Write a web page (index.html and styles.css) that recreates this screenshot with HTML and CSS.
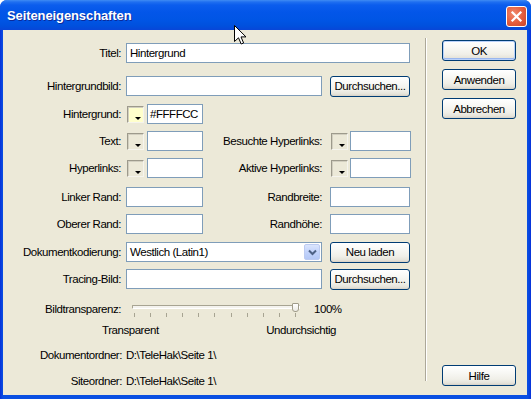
FILE: index.html
```html
<!DOCTYPE html>
<html lang="de">
<head>
<meta charset="utf-8">
<title>Seiteneigenschaften</title>
<link rel="stylesheet" href="styles.css">
</head>
<body>
<div class="window">
  <div class="titlebar">
    <span class="title">Seiteneigenschaften</span>
    <span class="close">
      <svg width="13" height="13" viewBox="0 0 13 13"><path d="M2.5 2.5 L10.5 10.5 M10.5 2.5 L2.5 10.5" stroke="#fff" stroke-width="2.2" stroke-linecap="square"/></svg>
    </span>
  </div>
  <div class="client">
    <div class="form">
      <div class="row">
        <label class="lbl">Titel:</label>
        <div class="input w-title">Hintergrund</div>
      </div>
      <div class="row gap13">
        <label class="lbl">Hintergrundbild:</label>
        <div class="input w-path"></div>
        <button class="btn btn-side">Durchsuchen...</button>
      </div>
      <div class="row gap8">
        <label class="lbl">Hintergrund:</label>
        <span class="swatch swatch-bg"><i class="tri"></i></span>
        <div class="input w-color">#FFFFCC</div>
      </div>
      <div class="row">
        <label class="lbl">Text:</label>
        <span class="swatch"><i class="tri"></i></span>
        <div class="input w-color"></div>
        <label class="lbl2">Besuchte Hyperlinks:</label>
        <span class="swatch swatch-r"><i class="tri"></i></span>
        <div class="input w-color2"></div>
      </div>
      <div class="row">
        <label class="lbl">Hyperlinks:</label>
        <span class="swatch"><i class="tri"></i></span>
        <div class="input w-color"></div>
        <label class="lbl2">Aktive Hyperlinks:</label>
        <span class="swatch swatch-r"><i class="tri"></i></span>
        <div class="input w-color2"></div>
      </div>
      <div class="row gap9">
        <label class="lbl">Linker Rand:</label>
        <div class="input w-small"></div>
        <label class="lbl2">Randbreite:</label>
        <div class="input w-small2"></div>
      </div>
      <div class="row">
        <label class="lbl">Oberer Rand:</label>
        <div class="input w-small"></div>
        <label class="lbl2">Randhöhe:</label>
        <div class="input w-small2"></div>
      </div>
      <div class="row gap8">
        <label class="lbl">Dokumentkodierung:</label>
        <div class="select">
          <span class="select-text">Westlich (Latin1)</span>
          <span class="select-arrow"><svg width="9" height="7" viewBox="0 0 9 7"><path d="M1 1.5 L4.5 5 L8 1.5" fill="none" stroke="#4d6185" stroke-width="2"/></svg></span>
        </div>
        <button class="btn btn-side">Neu laden</button>
      </div>
      <div class="row">
        <label class="lbl">Tracing-Bild:</label>
        <div class="input w-path"></div>
        <button class="btn btn-side">Durchsuchen...</button>
      </div>
      <div class="row slider-row">
        <label class="lbl">Bildtransparenz:</label>
        <div class="slider">
          <div class="track"></div>
          <div class="ticks">
            <i></i><i></i><i></i><i></i><i></i><i></i><i></i><i></i><i></i><i></i><i></i>
          </div>
          <span class="thumb"></span>
        </div>
        <span class="pct">100%</span>
      </div>
      <div class="captions">
        <span>Transparent</span>
        <span>Undurchsichtig</span>
      </div>
      <div class="info info-doc">
        <span class="lbl lbl-info">Dokumentordner:</span>
        <span class="val">D:\TeleHak\Seite 1\</span>
      </div>
      <div class="info info-site">
        <span class="lbl lbl-info">Siteordner:</span>
        <span class="val">D:\TeleHak\Seite 1\</span>
      </div>
    </div>
    <div class="sep"></div>
    <div class="actions">
      <button class="btn btn-act btn-default">OK</button>
      <button class="btn btn-act btn-apply">Anwenden</button>
      <button class="btn btn-act btn-cancel">Abbrechen</button>
      <button class="btn btn-act btn-help">Hilfe</button>
    </div>
  </div>
  <svg class="cursor" width="13" height="21" viewBox="0 0 13 21"><path d="M0.5 0.5 L0.5 16.5 L4.5 12.8 L7.2 19 L9.6 18 L7 11.9 L12 11.9 Z" fill="#fff" stroke="#000" stroke-width="1" stroke-linejoin="miter"/></svg>
</div>
</body>
</html>
```

FILE: styles.css
```css
* { box-sizing: border-box; }

body {
  margin: 0;
  background: #ffffff;
  font-family: "Liberation Sans", Arial, sans-serif;
  font-size: 11.5px;
  letter-spacing: -0.45px;
  color: #000;
}

.window {
  position: relative;
  width: 531px;
  height: 399px;
  display: flex;
  flex-direction: column;
  background: linear-gradient(90deg, #0831d9 0, #0846e0 2px, #0a4fe2 3px, #0a4fe2 527px, #0846e0 529px, #0831d9 531px);
  border-radius: 7px 7px 0 0;
  overflow: hidden;
}

.titlebar {
  flex: none;
  height: 30px;
  display: flex;
  align-items: center;
  padding: 0 4px 0 7px;
  background: linear-gradient(#3f8cf3 0, #1f6ff0 2px, #0b5ded 5px, #0356e9 12px, #0055e5 20px, #0050dd 26px, #0846d8 30px);
}

.title {
  flex: 1;
  color: #fff;
  font-weight: bold;
  font-size: 13px;
  letter-spacing: -0.1px;
  text-shadow: 1px 1px #0b2a9a;
  margin-top: 1px;
}

.close {
  width: 21px;
  height: 21px;
  margin-top: 2px;
  border: 1px solid #fff;
  border-radius: 3px;
  background: radial-gradient(circle at 35% 35%, #f0896c 0, #e35c3c 55%, #c6452a 100%);
  display: flex;
  align-items: center;
  justify-content: center;
}

.client {
  flex: 1;
  margin: 0 4px 4px 3px;
  background: #ece9d8;
  display: flex;
}

/* ---------- form ---------- */
.form {
  width: 422px;
  flex: none;
  padding-top: 13px;
  display: flex;
  flex-direction: column;
}

.row {
  display: flex;
  align-items: center;
  height: 20px;
  margin-top: 7px;
}
.row:first-child { margin-top: 0; }
.row.gap8 { margin-top: 8px; }
.row.gap9 { margin-top: 9px; }
.row.gap13 { margin-top: 13px; }

.lbl {
  width: 118px;
  flex: none;
  text-align: right;
  margin-right: 5px;
  white-space: nowrap;
}

.lbl2 {
  width: 119px;
  flex: none;
  text-align: right;
  white-space: nowrap;
}

.input {
  height: 20px;
  border: 1px solid #7f9db9;
  background: #fff;
  padding: 0 3px;
  line-height: 18px;
  white-space: nowrap;
  flex: none;
}
.w-title { width: 284px; }
.w-path { width: 196px; }
.w-color { width: 56px; padding-left: 2px; }
.w-color2 { width: 61px; }
.w-small { width: 77px; }
.w-small2 { width: 80px; margin-left: 8px; }

.swatch {
  width: 17px;
  height: 17px;
  flex: none;
  margin: 0 3px 0 1px;
  border: 1px solid;
  border-color: #9d9a8c #f5f4ee #f5f4ee #9d9a8c;
  box-shadow: inset 1px 1px #d2cfc0;
  background: #ece9d8;
  display: flex;
  align-items: flex-end;
  justify-content: flex-end;
  padding: 0 2px 2px 0;
}
.swatch-bg { background: #ffffcc; }
.swatch-r { margin: 0 2px 0 9px; }

.tri {
  width: 0;
  height: 0;
  border-left: 3px solid transparent;
  border-right: 3px solid transparent;
  border-top: 3px solid #000;
}

.btn {
  flex: none;
  height: 21px;
  padding: 0;
  border: 1px solid #003c74;
  border-radius: 3px;
  background: linear-gradient(#ffffff 0, #f9f9f6 30%, #f0efe8 70%, #e5e3da 90%, #d6d0c5 100%);
  font-family: inherit;
  font-size: 11.5px;
  letter-spacing: -0.45px;
  color: #000;
  text-align: center;
}
.btn-side { width: 80px; margin-left: 8px; }

.select {
  width: 196px;
  height: 20px;
  flex: none;
  border: 1px solid #7f9db9;
  background: #fff;
  display: flex;
  align-items: center;
  padding-left: 3px;
}
.select-text { flex: 1; white-space: nowrap; }
.select-arrow {
  width: 16px;
  height: 16px;
  margin-right: 1px;
  border: 1px solid #bccbf1;
  border-radius: 2px;
  background: linear-gradient(#dbe5fd, #c2d3fb 50%, #b4c8f6);
  display: flex;
  align-items: center;
  justify-content: center;
}

/* slider */
.slider-row { margin-top: 9px; align-items: flex-start; }
.slider-row .lbl { line-height: 20px; margin-top: 1px; }
.slider {
  position: relative;
  width: 168px;
  height: 20px;
  margin-left: 6px;
  flex: none;
}
.track {
  margin-top: 7px;
  height: 4px;
  border: 1px solid;
  border-color: #a7a492 #fff #fff #a7a492;
  border-radius: 1px;
  background: #f4f3ee;
}
.ticks {
  display: flex;
  justify-content: space-between;
  padding: 0 4px 0 2px;
  margin-top: 4px;
}
.ticks i {
  width: 1px;
  height: 4px;
  background: #a7a492;
}
.thumb {
  position: absolute;
  right: 1px;
  top: 5px;
  width: 7px;
  height: 9px;
  border: 1px solid #a09c8a;
  border-radius: 1px 1px 3px 3px;
  background: linear-gradient(#ffffff, #ecebe4);
}
.pct { margin-left: 14px; line-height: 20px; margin-top: 1px; }

.captions {
  display: flex;
  justify-content: space-between;
  width: 234px;
  margin-left: 99px;
  margin-top: 3px;
  height: 18px;
  line-height: 18px;
}

.info {
  display: flex;
  height: 16px;
  line-height: 16px;
}
.info-doc { margin-top: 8px; }
.info-site { margin-top: 10px; }
.lbl-info { width: 119px; margin-right: 4px; }
.val { white-space: nowrap; }

/* separator + actions */
.sep {
  width: 2px;
  flex: none;
  border-left: 1px solid #aca899;
  border-right: 1px solid #ffffff;
  margin: 8px 0 14px;
}

.actions {
  flex: 1;
  display: flex;
  flex-direction: column;
  padding: 10px 0 9px 15px;
}
.btn-act { width: 74px; }
.btn-default { box-shadow: inset 0 0 0 1px #b9d1fa, inset 0 -1px 0 1px #99b6ee; }
.btn-apply { margin-top: 8px; }
.btn-cancel { margin-top: 8px; }
.btn-help { margin-top: auto; }

.cursor {
  position: absolute;
  left: 234px;
  top: 25px;
}
```
